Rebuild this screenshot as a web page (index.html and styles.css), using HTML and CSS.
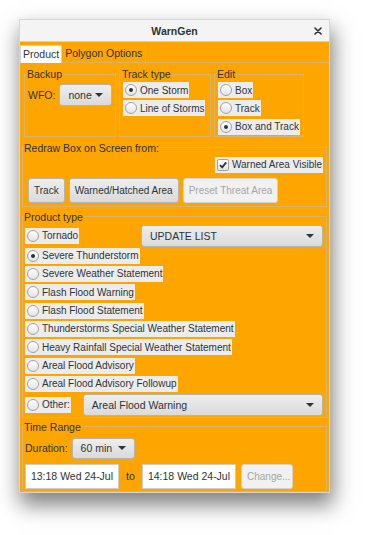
FILE: index.html
```html
<!DOCTYPE html>
<html lang="en">
<head>
  <meta charset="UTF-8" />
  <meta name="viewport" content="width=device-width, initial-scale=1.0"/>
  <title>WarnGen</title>
  <link rel="stylesheet" href="styles.css">
</head>
<body>
  <div class="window">
    <div class="titlebar">
      <span></span>
      <span class="title">WarnGen</span>
      <span class="close">
        <svg width="8" height="8" viewBox="0 0 8 8"><path d="M1 1L7 7M7 1L1 7" stroke="#2e3436" stroke-width="1.6" stroke-linecap="round"/></svg>
      </span>
    </div>

    <div class="content">
      <div class="tabs">
        <div class="tab active">Product</div>
        <div class="tab">Polygon Options</div>
      </div>

      <div class="panel">
        <div class="top-row">
          <fieldset class="group backup">
            <legend>Backup</legend>
            <div class="wfo">
              <span>WFO:</span>
              <div class="combo wfo-combo">none<i class="caret"></i></div>
            </div>
          </fieldset>
          <fieldset class="group track">
            <legend>Track type</legend>
            <div class="opts">
              <label class="opt"><span class="radio on"></span>One Storm</label>
              <label class="opt"><span class="radio"></span>Line of Storms</label>
            </div>
          </fieldset>
          <fieldset class="group edit">
            <legend>Edit</legend>
            <div class="opts">
              <label class="opt"><span class="radio"></span>Box</label>
              <label class="opt"><span class="radio"></span>Track</label>
              <label class="opt"><span class="radio on"></span>Box and Track</label>
            </div>
          </fieldset>
        </div>

        <fieldset class="group redraw">
          <legend>Redraw Box on Screen from:</legend>
          <div class="check-row">
            <label class="opt"><span class="check"><svg width="10" height="10" viewBox="0 0 10 10"><path d="M2 5.2L4.2 7.4L8.2 2.4" fill="none" stroke="#2e3436" stroke-width="1.8"/></svg></span>Warned Area Visible</label>
          </div>
          <div class="btn-row">
            <button class="btn">Track</button>
            <button class="btn">Warned/Hatched Area</button>
            <button class="btn disabled">Preset Threat Area</button>
          </div>
        </fieldset>

        <fieldset class="group product">
          <legend>Product type</legend>
          <div class="product-head">
            <label class="opt"><span class="radio"></span>Tornado</label>
            <div class="combo update-combo">UPDATE LIST<i class="caret"></i></div>
          </div>
          <div class="opts product-list">
            <label class="opt"><span class="radio on"></span>Severe Thunderstorm</label>
            <label class="opt"><span class="radio"></span>Severe Weather Statement</label>
            <label class="opt"><span class="radio"></span>Flash Flood Warning</label>
            <label class="opt"><span class="radio"></span>Flash Flood Statement</label>
            <label class="opt"><span class="radio"></span>Thunderstorms Special Weather Statement</label>
            <label class="opt"><span class="radio"></span>Heavy Rainfall Special Weather Statement</label>
            <label class="opt"><span class="radio"></span>Areal Flood Advisory</label>
            <label class="opt"><span class="radio"></span>Areal Flood Advisory Followup</label>
          </div>
          <div class="other-row">
            <label class="opt"><span class="radio"></span>Other:</label>
            <div class="combo other-combo">Areal Flood Warning<i class="caret"></i></div>
          </div>
        </fieldset>

        <fieldset class="group time">
          <legend>Time Range</legend>
          <div class="duration-row">
            <span>Duration:</span>
            <div class="combo duration-combo">60 min<i class="caret"></i></div>
          </div>
          <div class="date-row">
            <div class="field">13:18 Wed 24-Jul</div>
            <span class="to">to</span>
            <div class="field">14:18 Wed 24-Jul</div>
            <button class="btn disabled change">Change...</button>
          </div>
        </fieldset>
      </div>
    </div>
  </div>
</body>
</html>
```

FILE: styles.css
```css
:root {
  --orange: #ffa500;
  --line: #d9b36e;
  --text: #2e3436;
  --item: #ececec;
  --border: #b4b4b4;
}

* {
  box-sizing: border-box;
  margin: 0;
  padding: 0;
}

html, body {
  height: 100%;
}

body {
  background: #ffffff;
  font-family: "Liberation Sans", Arial, sans-serif;
  font-size: 10px;
  color: var(--text);
  padding: 19px 0 0 19px;
}

.window {
  width: 311px;
  border: 1px solid #d6d6d6;
  box-shadow: 2px 11px 20px 1px rgba(0, 0, 0, 0.5);
}

.titlebar {
  height: 22px;
  background: #f4f4f4;
  border-bottom: 1px solid #d0d0d0;
  display: grid;
  grid-template-columns: 1fr auto 1fr;
  align-items: center;
}

.title {
  font-weight: bold;
  font-size: 10.5px;
}

.close {
  justify-self: end;
  margin-right: 7px;
  display: flex;
}

.content {
  background: var(--orange);
}

.tabs {
  display: flex;
  padding: 3px 0 0 0;
  border-bottom: 1px solid var(--line);
  height: 21px;
}

.tab {
  height: 18px;
  line-height: 17px;
  padding: 0 3px;
  border-right: 1px solid var(--line);
  font-size: 10.5px;
}

.tab.active {
  background: #ffffff;
  border: 1px solid #d0d0d0;
  border-bottom: none;
  padding: 0 2px;
}

.panel {
  padding: 0 2px;
}

.group {
  border: 1px solid var(--line);
  min-width: 0;
}

.group legend {
  font-size: 10.5px;
  line-height: 12px;
  padding: 0;
  margin-left: -1px;
}

.top-row {
  display: flex;
  gap: 3px;
  margin: 5px 0 0 2px;
}

.top-row .group {
  padding: 2px 3px 1px 3px;
}

.backup { width: 92px; }
.track { width: 92px; }
.edit { width: 90px; }

.wfo {
  display: flex;
  align-items: center;
  gap: 4px;
  margin-top: 2px;
  font-size: 10.5px;
}

.opts {
  display: flex;
  flex-direction: column;
  align-items: flex-start;
  gap: 2.33px;
}

.opt {
  display: inline-flex;
  align-items: center;
  gap: 3px;
  height: 16px;
  padding: 0 1px 0 2px;
  background: var(--item);
  white-space: nowrap;
}

.radio {
  width: 12px;
  height: 12px;
  border-radius: 50%;
  border: 1px solid #a2a2a2;
  background: linear-gradient(#ffffff, #e4e4e4);
  display: flex;
  align-items: center;
  justify-content: center;
}

.radio.on::after {
  content: "";
  width: 4px;
  height: 4px;
  border-radius: 50%;
  background: var(--text);
}

.check {
  width: 12px;
  height: 12px;
  border-radius: 2px;
  border: 1px solid #a2a2a2;
  background: linear-gradient(#ffffff, #e4e4e4);
  display: flex;
  align-items: center;
  justify-content: center;
}

.combo {
  display: flex;
  align-items: center;
  height: 22px;
  padding: 0 8px;
  border: 1px solid var(--border);
  border-radius: 3px;
  background: linear-gradient(#eeeeee, #dadada);
  white-space: nowrap;
  font-size: 10.5px;
}

.caret {
  margin-left: auto;
  width: 0;
  height: 0;
  border-left: 4px solid transparent;
  border-right: 4px solid transparent;
  border-top: 4px solid var(--text);
}

.wfo-combo { width: 53px; }

.redraw {
  margin-top: 5px;
  padding: 3px 3px 3px 5px;
}

.redraw legend {
  margin-left: -4px;
}

.check-row {
  display: flex;
  justify-content: flex-end;
}

.btn-row {
  display: flex;
  gap: 4px;
  margin-top: 5px;
}

.btn {
  height: 25px;
  padding: 0 5px;
  font-family: inherit;
  font-size: 10px;
  color: var(--text);
  border: 1px solid var(--border);
  border-radius: 3px;
  background: linear-gradient(#eeeeee, #dadada);
}

.btn.disabled {
  color: #a6a6a6;
  background: #f1f1f1;
  border-color: #d2d2d2;
}

.product {
  margin-top: 4px;
  padding: 2px 3px 1px 2px;
}

.product-head {
  display: flex;
  align-items: center;
  justify-content: space-between;
}

.update-combo { width: 182px; }

.product-list {
  margin-top: 1px;
}

.other-row {
  display: flex;
  align-items: center;
  gap: 12px;
  margin-top: 1.7px;
}

.other-combo { flex: 1; }

.time {
  margin-top: 3px;
  padding: 5px 3px 2px 2px;
}

.duration-row {
  display: flex;
  align-items: center;
  gap: 4px;
  font-size: 10.5px;
}

.duration-combo {
  width: 63px;
  height: 21px;
}

.date-row {
  display: flex;
  align-items: center;
  margin-top: 5px;
}

.field {
  width: 94px;
  height: 25px;
  line-height: 23px;
  text-align: center;
  background: #ffffff;
  border: 1px solid #cccccc;
  font-size: 10.5px;
}

.to {
  width: 23px;
  text-align: center;
  font-size: 10.5px;
}

.change {
  margin-left: 5px;
  width: 52px;
}
```
